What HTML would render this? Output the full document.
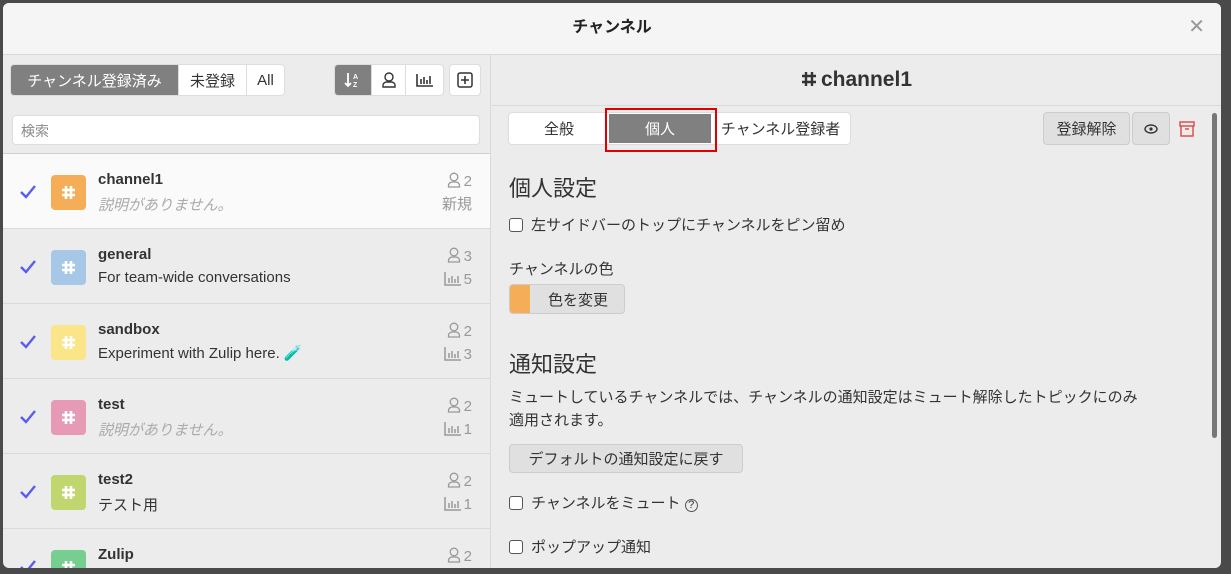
<!DOCTYPE html>
<html><head><meta charset="utf-8"><style>
*{box-sizing:border-box;margin:0;padding:0}
body{width:1231px;height:574px;background:#4a4a4a;font-family:"Liberation Sans","Noto Sans CJK JP",sans-serif;color:#333;overflow:hidden;position:relative}
.modal{position:absolute;left:3px;top:3px;width:1218px;height:565px;background:#ececec;border-radius:6px;overflow:hidden}
.hdr{height:52px;background:#f5f5f5;border-bottom:1px solid #d9d9d9;text-align:center;font-size:16px;font-weight:bold;line-height:50px;color:#222}
.x{position:absolute;right:16px;top:14px;font-size:20px;color:#999;font-weight:normal;line-height:20px}
.left{position:absolute;left:0;top:52px;width:488px;bottom:0;border-right:1px solid #d9d9d9;overflow:hidden}
.grp{position:absolute;top:9px;height:32px;display:flex;border:1px solid #ddd;border-radius:4px;overflow:hidden;background:#fff;font-size:15px}
.grp div{display:flex;align-items:center;justify-content:center;border-right:1px solid #ddd;padding:0 9px}
.grp div:last-child{border-right:none}
.grp .on{background:#808080;color:#fff}
.search{position:absolute;left:9px;top:60px;width:468px;height:30px;background:#fff;border:1px solid #ddd;border-radius:4px;font-size:14px;color:#888;padding:5px 8px}
.list{position:absolute;left:0;top:98px;width:488px;border-top:1px solid #d0d0d0}
.row{height:75px;border-bottom:1px solid #d9d9d9;position:relative;overflow:hidden}
.row.sel{background:#fafafa}
.chk{position:absolute;left:16px;top:30px}
.ic{position:absolute;left:48px;top:21px;width:35px;height:35px;border-radius:4px}
.ic svg{position:absolute;left:10px;top:10px}
.nm{position:absolute;left:95px;top:17px;font-weight:bold;font-size:15px;color:#333}
.ds{position:absolute;left:95px;top:40px;font-size:15px;color:#333}
.ds.i{color:#aaa;font-style:italic}
.st{position:absolute;right:19px;top:16px;text-align:right;font-size:15px;color:#999;line-height:23px}
.st svg{vertical-align:-2px;margin-right:3px}
.right{position:absolute;left:489px;top:52px;right:0;bottom:0;overflow:hidden}
.ch{height:51px;border-bottom:1px solid #d9d9d9;text-align:center;font-size:21px;font-weight:bold;line-height:50px;color:#333}
.tabs{position:absolute;left:16px;top:57px;height:33px;width:343px;background:#fff;border:1px solid #ddd;border-radius:4px;display:flex;font-size:15px}
.tabs div{display:flex;align-items:center;justify-content:center}
.btn{position:absolute;background:#e0e0e0;border:1px solid #ccc;border-radius:4px;font-size:15px;display:flex;align-items:center;justify-content:center}
h2{position:absolute;left:17px;font-size:22px;font-weight:normal;color:#333}
.t{position:absolute;left:17px;font-size:15px;color:#333}
.cb{display:inline-block;width:14px;height:14px;border:1px solid #555;border-radius:3px;vertical-align:-2px;margin-right:8px;background:#fff}
</style></head><body>
<svg width="0" height="0" style="position:absolute"><defs>
<symbol id="chk" viewBox="0 0 18 16"><path d="M2 8l5 5 9-11" fill="none" stroke="#5b5bf0" stroke-width="2.4"/></symbol>
<symbol id="hash" viewBox="0 0 15 15"><path d="M5 1v13M10 1v13M1 5h13M1 10h13" stroke="#fff" stroke-width="2.6"/></symbol>
<symbol id="usr" viewBox="0 0 14 16"><circle cx="7" cy="5" r="3.8" fill="none" stroke="#999" stroke-width="1.3"/><path d="M1.5 15v-1.5a4 3.5 0 0 1 4-3.5h3a4 3.5 0 0 1 4 3.5V15z" fill="none" stroke="#999" stroke-width="1.3"/></symbol>
<symbol id="bar" viewBox="0 0 17 15"><path d="M1 1v13h16M5 12V7M8 12V5M11 12V8M14 12V5" stroke="#999" stroke-width="1.5" fill="none"/></symbol>
</defs></svg>
<div class="modal">
<div class="hdr">チャンネル<span class="x">✕</span></div>
<div class="left">
 <div class="grp" style="left:7px;width:275px"><div class="on" style="width:168px">チャンネル登録済み</div><div style="width:68px">未登録</div><div style="flex:1">All</div></div>
 <div class="grp" style="left:331px;width:110px"><div class="on" style="width:37px"><svg width="18" height="18"><path d="M4 2v13M1 12l3 3 3-3" stroke="#fff" stroke-width="1.8" fill="none"/><text x="9" y="8" font-size="7" fill="#fff" font-family="Liberation Sans" font-weight="bold">A</text><text x="9" y="16" font-size="7" fill="#fff" font-family="Liberation Sans" font-weight="bold">Z</text></svg></div><div style="width:34px"><svg width="14" height="16" viewBox="0 0 14 16"><circle cx="7" cy="5" r="4" fill="none" stroke="#333" stroke-width="1.4"/><path d="M1 15v-2a4 3 0 0 1 4-3h4a4 3 0 0 1 4 3v2z" fill="none" stroke="#333" stroke-width="1.4"/></svg></div><div style="flex:1"><svg width="18" height="14"><path d="M1 1v12h16M5 11V6M8 11V4M11 11V7M14 11V3" stroke="#333" stroke-width="1.6" fill="none"/></svg></div></div>
 <div class="grp" style="left:446px;width:32px"><div style="flex:1;padding:0"><svg width="16" height="16"><rect x="1" y="1" width="14" height="14" rx="2" fill="none" stroke="#333" stroke-width="1.5"/><path d="M8 4v8M4 8h8" stroke="#333" stroke-width="1.6"/></svg></div></div>
 <div class="search">検索</div>
 <div class="list">
  <div class="row sel"><svg class="chk" width="18" height="16"><use href="#chk"/></svg><div class="ic" style="background:#f5ae57"><svg width="15" height="15"><use href="#hash"/></svg></div><div class="nm">channel1</div><div class="ds i">説明がありません。</div><div class="st"><svg width="14" height="16"><use href="#usr"/></svg>2<br>新規</div></div>
  <div class="row"><svg class="chk" width="18" height="16"><use href="#chk"/></svg><div class="ic" style="background:#a6c7e5"><svg width="15" height="15"><use href="#hash"/></svg></div><div class="nm">general</div><div class="ds">For team-wide conversations</div><div class="st"><svg width="14" height="16"><use href="#usr"/></svg>3<br><svg width="17" height="15"><use href="#bar"/></svg>5</div></div>
  <div class="row"><svg class="chk" width="18" height="16"><use href="#chk"/></svg><div class="ic" style="background:#fae589"><svg width="15" height="15"><use href="#hash"/></svg></div><div class="nm">sandbox</div><div class="ds">Experiment with Zulip here. 🧪</div><div class="st"><svg width="14" height="16"><use href="#usr"/></svg>2<br><svg width="17" height="15"><use href="#bar"/></svg>3</div></div>
  <div class="row"><svg class="chk" width="18" height="16"><use href="#chk"/></svg><div class="ic" style="background:#e79ab5"><svg width="15" height="15"><use href="#hash"/></svg></div><div class="nm">test</div><div class="ds i">説明がありません。</div><div class="st"><svg width="14" height="16"><use href="#usr"/></svg>2<br><svg width="17" height="15"><use href="#bar"/></svg>1</div></div>
  <div class="row"><svg class="chk" width="18" height="16"><use href="#chk"/></svg><div class="ic" style="background:#c2d66f"><svg width="15" height="15"><use href="#hash"/></svg></div><div class="nm">test2</div><div class="ds">テスト用</div><div class="st"><svg width="14" height="16"><use href="#usr"/></svg>2<br><svg width="17" height="15"><use href="#bar"/></svg>1</div></div>
  <div class="row"><svg class="chk" width="18" height="16"><use href="#chk"/></svg><div class="ic" style="background:#76ce90"><svg width="15" height="15"><use href="#hash"/></svg></div><div class="nm">Zulip</div><div class="st"><svg width="14" height="16"><use href="#usr"/></svg>2</div></div>
 </div>
</div>
<div class="right">
 <div class="ch"><svg width="16" height="16" style="vertical-align:-1px;margin-right:4px"><path d="M5 1v14M11 1v14M1 5h14M1 11h14" stroke="#333" stroke-width="2.4"/></svg>channel1</div>
 <div class="tabs"><div style="width:100px">全般</div><div style="width:102px;background:#808080;color:#fff;margin:1px 0">個人</div><div style="flex:1">チャンネル登録者</div></div>
 <div style="position:absolute;left:113px;top:53px;width:112px;height:44px;border:2px solid #e00000"></div>
 <div class="btn" style="left:551px;top:57px;width:87px;height:33px">登録解除</div>
 <div class="btn" style="left:640px;top:57px;width:38px;height:33px"><svg width="14" height="10"><ellipse cx="7" cy="5" rx="6" ry="4" fill="none" stroke="#333" stroke-width="1.4"/><circle cx="7" cy="5" r="1.6" fill="#333"/></svg></div>
 <svg style="position:absolute;left:686px;top:65px" width="18" height="18"><rect x="2" y="2" width="14" height="4" fill="none" stroke="#d9534f" stroke-width="1.5"/><path d="M3 6v10h12V6M7 9h4" fill="none" stroke="#d9534f" stroke-width="1.5"/></svg>
 <div style="position:absolute;left:720px;top:58px;width:5px;height:325px;background:#777;border-radius:3px"></div>
 <h2 style="top:116px">個人設定</h2>
 <div class="t" style="top:159px"><span class="cb"></span>左サイドバーのトップにチャンネルをピン留め</div>
 <div class="t" style="top:203px">チャンネルの色</div>
 <div class="btn" style="left:17px;top:229px;width:116px;height:30px;justify-content:flex-start;overflow:hidden"><span style="width:20px;height:30px;background:#f5ae57;margin-right:18px"></span>色を変更</div>
 <h2 style="top:292px">通知設定</h2>
 <div class="t" style="top:331px;line-height:23px;width:690px;white-space:nowrap">ミュートしているチャンネルでは、チャンネルの通知設定はミュート解除したトピックにのみ<br>適用されます。</div>
 <div class="btn" style="left:17px;top:389px;width:234px;height:29px">デフォルトの通知設定に戻す</div>
 <div class="t" style="top:437px"><span class="cb"></span>チャンネルをミュート <span style="font-size:11px;border:1px solid #555;border-radius:50%;display:inline-block;width:13px;height:13px;line-height:11px;text-align:center">?</span></div>
 <div class="t" style="top:481px"><span class="cb"></span>ポップアップ通知</div>
</div>
</div>
</body></html>
